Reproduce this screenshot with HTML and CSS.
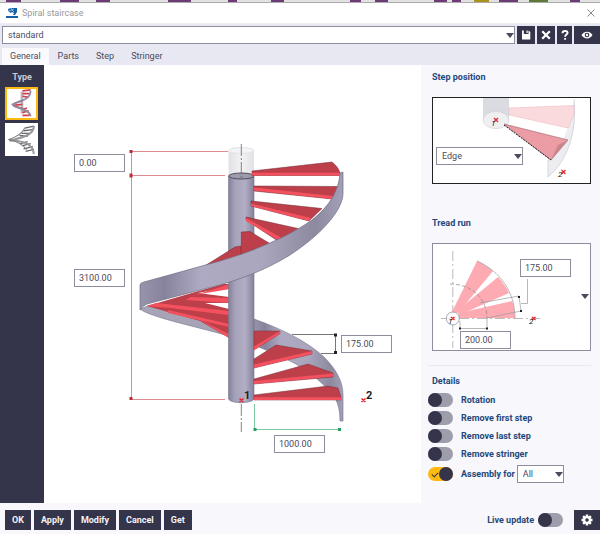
FILE: index.html
```html
<!DOCTYPE html>
<html lang="en">
<head>
    <meta charset="UTF-8">
    <meta name="viewport" content="width=device-width, initial-scale=1.0">
    <title>Spiral staircase</title>
    <link rel="stylesheet" href="styles.css">
</head>
<body>
    <svg class="strip" viewBox="0 0 600 2" preserveAspectRatio="none" aria-hidden="true">
        <path fill="#6d3b76" d="M6 0h15v2H6zM60 0h19v2H60zM96 0h14v2H96zM168 0h23v2h-23zM228 0h9v2h-9zM271 0h13v2h-13zM350 0h11v2h-11zM375 0h13v2h-13zM434 0h13v2h-13zM452 0h9v2h-9zM499 0h19v2h-19zM570 0h10v2h-10z"/>
        <path fill="#a8941c" d="M474 0h15v2h-15z"/>
        <path fill="#5d7a34" d="M529 0h19v2h-19z"/>
    </svg>
    <header class="titlebar">
        <svg class="logo" viewBox="0 0 12 10" aria-hidden="true">
            <path fill="#1362a8" d="M0 8h12v2H0zM2 1l3-1 6 0v4l-2 3H7l1-2-2-1-1 1-3-2z"/>
            <path stroke="#fff" stroke-width=".5" fill="none" d="M5 0l1 2 2-1M2 3l4-1 2 2"/>
        </svg>
        <h1>Spiral staircase</h1>
        <button class="close" aria-label="Close">
            <svg viewBox="0 0 8 8"><path d="M.5.5l7 7M7.5.5l-7 7" stroke="#888" fill="none"/></svg>
        </button>
    </header>

    <div class="toolbar">
        <span class="select preset">
            <select aria-label="Saved settings"><option>standard</option></select>
        </span>
        <button class="dark tool" aria-label="Save">
            <svg viewBox="0 0 10 10"><path fill="#fff" fill-rule="evenodd" d="M1 .5h1.800v3.500h4.700V.5l1.800 1.500v7.500H1zM5.500.5h1.200v2.500H5.500z"/></svg>
        </button>
        <button class="dark tool" aria-label="Delete">
            <svg viewBox="0 0 10 10"><path stroke="#fff" stroke-width="2.300" d="M1.200 1.200l7.600 7.600M8.800 1.200L1.200 8.800"/></svg>
        </button>
        <button class="dark tool help" aria-label="Help">
            <svg viewBox="0 0 10 10"><path fill="none" stroke="#fff" stroke-width="1.900" d="M2.500 3.200C2.500.300 7.600.300 7.600 2.800 7.600 4.500 5.100 4.600 5.100 6.700M5.100 7.900v1.900"/></svg>
        </button>
        <button class="dark tool view" aria-label="Preview">
            <svg viewBox="0 0 12 10"><path fill="#fff" d="M.5 5C3 .5 9 .5 11.500 5 9 9.500 3 9.500.5 5z"/><circle cx="6" cy="5" r="2.300" fill="#34344a"/><circle cx="6" cy="5" r="1.200" fill="#fff"/></svg>
        </button>
    </div>

    <nav class="tabs">
        <a class="active" href="#general">General</a>
        <a href="#parts">Parts</a>
        <a href="#step">Step</a>
        <a href="#stringer">Stringer</a>
    </nav>

    <main class="content">
        <aside class="types">
            <h2>Type</h2>
            <button class="type selected" aria-label="Stairs with center column">
                <svg viewBox="0 0 32 32">
                    <path fill="#b8b8c4" d="M15 3h3v24h-3z"/>
                    <path stroke="#d23f4c" stroke-width="1.900" d="M17 2l9-1M17 5h8M17 8l6 1M8 16l9-3M7 18l10-1M9 19l9 3M17 23l5-2M17 26l7-2M17 29h8"/>
                    <path fill="none" stroke="#8c8ca2" stroke-width="2" d="M26 2c0 8-7 10-13 12l-7 3c1 3 9 4 13 6 4 2 7 4 7 7"/>
                </svg>
            </button>
            <button class="type" aria-label="Stairs without column">
                <svg viewBox="0 0 32 32">
                    <path stroke="#68686d" stroke-width="1.300" d="M19 5l9-2M18 7.500l9-1M16 10l9 0M14 12l8 1M15 20l7-2M17 22l8-2M18 25l9-2M20 27.500l8-2"/>
                    <path fill="none" stroke="#97979c" stroke-width="2" d="M28 3c0 8-9 11-24 14 14 0 23 3 24 13"/>
                    <path fill="none" stroke="#77777c" d="M19 5c-2 5-7 8-15 11 8 2 14 5 17 10"/>
                </svg>
            </button>
        </aside>

        <section class="model" id="general">
            <div class="drawing">
                <svg viewBox="44 65 377 438" aria-hidden="true">
                    <defs>
                        <linearGradient id="column">
                            <stop offset="0" stop-color="#85819b"/>
                            <stop offset=".25" stop-color="#a5a1b9"/>
                            <stop offset=".65" stop-color="#b2aec5"/>
                            <stop offset="1" stop-color="#85819b"/>
                        </linearGradient>
                        <linearGradient id="band">
                            <stop offset="0" stop-color="#9894ad"/>
                            <stop offset=".12" stop-color="#87839c"/>
                            <stop offset=".3" stop-color="#aeaac3"/>
                            <stop offset=".6" stop-color="#aaa6be"/>
                            <stop offset=".86" stop-color="#8d899f"/>
                            <stop offset="1" stop-color="#a39fb8"/>
                        </linearGradient>
                        <linearGradient id="ghost">
                            <stop offset="0" stop-color="#d9d9df"/>
                            <stop offset=".5" stop-color="#f0f0f3"/>
                            <stop offset="1" stop-color="#dadae0"/>
                        </linearGradient>
                    </defs>

                    <!-- lower stringer, behind the column -->
                    <path fill="#a7a4b7" stroke="#777389" stroke-width=".6" d="M140 309C150 317 190 325 229 336V318L150 305z"/>
                    <path fill="url(#band)" stroke="#777389" stroke-width=".6" d="M254 319C282 329 306 341 323 356 336 369 343 381 343 395V421H340C340 407 337 399 329 390L315 377 296 364 278 355 254 345z"/>

                    <!-- treads on the left -->
                    <path fill="#bd3f4a" d="M147 306L223 284H229V338L200 321 168 312z"/>
                    <path fill="#fff" d="M198 293L229 287V297zM205 303H229V309z"/>
                    <path fill="#f4515f" d="M192 296L230 284V289L200 294zM190 297L229 298V303L186 300zM147 306L156 303 229 311V315L170 308zM168 310L229 324V327L168 313zM200 320L229 334V338z"/>

                    <path fill="url(#column)" stroke="#77738b" stroke-width=".6" d="M228.500 176V399C231 404 251 404 254 399V176z"/>
                    <path fill="url(#ghost)" opacity=".8" d="M228.500 176V150C231 146 251 146 254 150V176z"/>
                    <ellipse cx="241.300" cy="150.500" rx="12.600" ry="2.800" fill="#f4f4f7" stroke="#d8d8df" stroke-width=".5"/>
                    <ellipse cx="241.300" cy="176" rx="12.600" ry="3" fill="#9d9bab" stroke="#4f4c60"/>

                    <!-- upper treads -->
                    <g fill="#bd3f4a" stroke="#6f2832" stroke-width=".5">
                        <path d="M252 171L332 162C336 165 339 169 340 173V175.500H252z"/>
                        <path d="M254 186L338 186.500 332 199 254 191z"/>
                        <path d="M251 201L322 208.500 309 221 251 206z"/>
                        <path d="M246 217L298 228.500 278 241 246 220z"/>
                        <path d="M241.300 232L250 231.500 269 243 241.300 255z"/>
                        <path d="M203 267L235 247 241 246V256z"/>
                    </g>
                    <path fill="#f4515f" d="M252 172.800H340V175.500H252zM254 187.500L333 196 332 199 254 190.500zM251 203.500L311 218 309 221 251 206zM246 218L281 237.500 278 240 246 221z"/>

                    <!-- upper stringer -->
                    <path fill="url(#band)" stroke="#706c83" stroke-width=".7" d="M140 310V285Q140 283 144 282L220 261C261 249 292 234 312 220 331 205 339 189 340 173L343 172V193C343 210 322 234 290 255 267 269 244 278 223 284L147 304Q142 306 140 310z"/>

                    <!-- lower treads -->
                    <g fill="#bd3f4a" stroke="#7b303a" stroke-width=".5">
                        <path d="M254 331L280 331V333.500L254 350z"/>
                        <path d="M254 359L276 345 312 351V354L254 368z"/>
                        <path d="M254 379L308 364 333 373V377L254 384z"/>
                        <path d="M254 395L328 386 338 388 341 397V400H254z"/>
                    </g>
                    <path fill="#f4515f" d="M254 346.500L280 331V333.500L254 350zM254 364.500L312 351V354L254 368zM254 381L333 373.500V376.500L254 384zM254 397.200H341V400H254z"/>

                    <!-- dimension lines -->
                    <path fill="none" stroke="#df8b8f" d="M228 151.500H131.500V398M131 175.500H225M131 399.500H225"/>
                    <path fill="#b92f38" d="M129.500 150h3v3h-3zM129.500 173.500h3v4h-3zM129.500 397h3v3h-3z"/>
                    <path fill="none" stroke="#777" d="M292 334.500H335.500V353.500H321"/>
                    <path fill="#222" d="M334 333.500h3v3h-3zM334 351h3v3h-3z"/>
                    <path fill="none" stroke="#7fc6a2" d="M254.500 404V429.500H340"/>
                    <path fill="#21a35d" d="M253.500 428h3v3h-3zM338 428h3v3h-3z"/>
                    <path fill="none" stroke="#666" stroke-width=".8" stroke-dasharray="12 2 2 2" d="M241.300 144V179M241.300 404V432"/>
                    <path fill="none" stroke="#e8202a" stroke-width="1.500" d="M239.500 398.500l4 3.500M243.500 398.500l-4 3.500M361.500 398.500l4 3.500M365.500 398.500l-4 3.500"/>
                    <text class="point" x="244" y="399">1</text>
                    <text class="point" x="366" y="399">2</text>
                </svg>
                <input class="field top-offset" type="text" value="0.00" aria-label="Column extension">
                <input class="field height" type="text" value="3100.00" aria-label="Stair height">
                <input class="field rise" type="text" value="175.00" aria-label="Step rise">
                <input class="field radius" type="text" value="1000.00" aria-label="Step length">
            </div>
        </section>

        <aside class="options">
            <section class="group">
                <h2>Step position</h2>
                <div class="picture position">
                    <svg viewBox="433 98 157 85" aria-hidden="true">
                        <path fill="#ededf1" d="M574 99C578 130 568 160 548 177V160C562 147 570 130 574 99z"/>
                        <path fill="none" stroke="#c9c9d1" stroke-width=".7" d="M574 99C577 132 568 160 548 177V160"/>
                        <path fill="#dadae1" d="M483 98H509V119H483z"/>
                        <ellipse cx="496" cy="120" rx="13" ry="8.500" fill="#f0f0f3" stroke="#cfcfd8" stroke-width=".7"/>
                        <path fill="#fadadd" stroke="#edb5bb" stroke-width=".5" d="M509 108L574 105.500 574 114 568 128 509 115z"/>
                        <path fill="#eb9ca5" stroke="#a06068" stroke-width=".6" d="M504 124L568 140 551 160z"/>
                        <path fill="#c9868e" d="M568 140L558 145 551 160z"/>
                        <path fill="none" stroke="#222" stroke-dasharray="2 1" d="M504 125L551 160"/>
                        <path stroke="#e8202a" stroke-width="1.200" d="M494 118l4 4M498 118l-4 4M561.500 170l4 4M565.500 170l-4 4"/>
                        <text class="mark" x="491" y="126">1</text>
                        <text class="mark" x="558" y="177">2</text>
                    </svg>
                    <span class="select edge">
                        <select aria-label="Step position"><option>Edge</option></select>
                    </span>
                </div>
            </section>

            <section class="group">
                <h2>Tread run</h2>
                <div class="picture run">
                    <svg viewBox="433 244 157 106" aria-hidden="true">
                        <path fill="none" stroke="#aaa" stroke-width=".8" stroke-dasharray="10 3 2 3" d="M452.800 251V348M441 318.500H540"/>
                        <g fill="#feaab3">
                            <path d="M452 312L477 261C482 263 488 267 493 271L458 313z"/>
                            <path d="M457 311L498 277C503 282 506 287 509 293L459 315z"/>
                            <path d="M459 313L512 301C514 306 515 312 515 318H459z"/>
                        </g>
                        <path fill="none" stroke="#999" stroke-width=".7" d="M477 261C500 271 515 292 515 318M480 303L519 296 521 311 487 318M460 321V328.500H487V318M527.500 279V303.500H521"/>
                        <path fill="none" stroke="#888" stroke-width=".7" stroke-dasharray="4 2" d="M450 284C472 284 487 299 487 318"/>
                        <path fill="#222" d="M518 296h2v2h-2zM520 310h2v2h-2zM459 327.500h2v2h-2zM486 327.500h2v2h-2z"/>
                        <circle cx="452.800" cy="318.500" r="6.500" fill="#fff" fill-opacity=".8" stroke="#888" stroke-width=".7"/>
                        <path stroke="#e8202a" stroke-width="1.400" d="M451 317l3.500 3M454.500 317l-3.500 3M532 317l3.500 3M535.500 317l-3.500 3"/>
                        <text class="mark" x="448" y="324">1</text>
                        <text class="mark" x="529" y="324">2</text>
                    </svg>
                    <input class="field tread" type="text" value="175.00" aria-label="Tread run">
                    <input class="field inner" type="text" value="200.00" aria-label="Measuring distance">
                    <button class="arrow" aria-label="Choose tread run type"></button>
                </div>
            </section>

            <section class="group details">
                <h2>Details</h2>
                <label class="switch-row"><input class="switch" type="checkbox"> Rotation</label>
                <label class="switch-row"><input class="switch" type="checkbox"> Remove first step</label>
                <label class="switch-row"><input class="switch" type="checkbox"> Remove last step</label>
                <label class="switch-row"><input class="switch" type="checkbox"> Remove stringer</label>
                <div class="assembly">
                    <label class="switch-row"><input class="switch" type="checkbox" checked> Assembly for</label>
                    <span class="select all">
                        <select aria-label="Assembly for"><option>All</option></select>
                    </span>
                </div>
            </section>
        </aside>
    </main>

    <footer class="actions">
        <button class="dark">OK</button>
        <button class="dark">Apply</button>
        <button class="dark">Modify</button>
        <button class="dark">Cancel</button>
        <button class="dark">Get</button>
        <label class="live">Live update <input class="switch" type="checkbox"></label>
        <button class="dark settings" aria-label="Settings">
            <svg viewBox="0 0 12 12"><path stroke="#fff" stroke-width="2.400" d="M6 .5v11M.5 6h11M2.100 2.100l7.800 7.800M9.900 2.100L2.100 9.900"/><circle cx="6" cy="6" r="4" fill="#fff"/><circle cx="6" cy="6" r="1.800" fill="#34344a"/></svg>
        </button>
    </footer>
</body>
</html>
```
FILE: styles.css
```css
* {
    box-sizing: border-box;
}
body {
    margin: 0;
    min-height: 100vh;
    display: flex;
    flex-direction: column;
    background: #f7f7fc;
    color: #4b4b5c;
    font-family: Roboto, "Open Sans", sans-serif;
    font-size: 9px;
    line-height: 12px;
}
button, input, select {
    margin: 0;
    padding: 0;
    border: 0;
    border-radius: 0;
    font: inherit;
    color: inherit;
}
svg {
    display: block;
}
h1, h2 {
    margin: 0;
    font-size: 9px;
    line-height: 12px;
}

/* title bar */
.strip {
    width: 100%;
    height: 2px;
    background: #e2e2e2;
}
.titlebar {
    display: flex;
    align-items: center;
    gap: 4px;
    height: 22px;
    padding: 0 5px 0 6px;
    background: #fff;
    border-top: 1px solid #aaa;
    border-bottom: 1px solid #ececf2;
}
.titlebar h1 {
    flex: 1;
    color: #999;
    font-weight: 400;
}
.logo {
    width: 12px;
    height: 10px;
}
.close {
    background: none;
}
.close svg {
    width: 8px;
    height: 8px;
}

/* preset row */
.toolbar {
    display: flex;
    gap: 2px;
    padding: 2px 0 4px 2px;
    background: #e8e8f2;
}
.select {
    position: relative;
    display: block;
}
.select::after, .arrow::after {
    content: "";
    display: block;
    border: 4px solid transparent;
    border-top: 5px solid #4b4b5c;
    border-bottom: 0;
}
.select::after {
    position: absolute;
    right: 1px;
    top: 7px;
    pointer-events: none;
}
.select select {
    display: block;
    appearance: none;
    width: 100%;
    height: 18px;
    padding: 0 10px 0 5px;
    background: #fff;
    border: 1px solid #8d8d9e;
}
.preset {
    flex: 1;
}
.dark {
    display: flex;
    align-items: center;
    justify-content: center;
    background: #34344a;
    color: #f2f2f7;
    font-weight: 700;
}
.tool {
    width: 18px;
    height: 18px;
}
.tool svg {
    width: 10px;
    height: 10px;
}
.help {
    width: 15px;
}
.view {
    width: 26px;
}
.view svg {
    width: 12px;
}

/* tabs */
.tabs {
    display: flex;
    gap: 1px;
    padding-left: 2px;
    background: #e8e8f2;
}
.tabs a {
    padding: 2px 8px 3px;
    color: #4b4b5c;
    text-decoration: none;
}
.tabs .active {
    background: #fafafe;
}

/* content */
.content {
    flex: 1;
    display: flex;
}
.types {
    width: 44px;
    padding: 6px 5px;
    display: flex;
    flex-direction: column;
    gap: 3px;
    background: #34344a;
}
.types h2 {
    margin-bottom: 1px;
    color: #c9c9d4;
    text-align: center;
    font-weight: 700;
}
.type {
    width: 33px;
    height: 33px;
    background: #fff;
}
.type.selected {
    border: 2px solid #fdbb12;
}
.type svg {
    width: 100%;
}
.model {
    flex: 1;
    background: #fff;
}
.drawing {
    position: relative;
    width: 377px;
    margin: 0 auto;
}
.drawing svg {
    width: 377px;
}
.point {
    font-size: 11px;
    font-weight: 700;
    fill: #222;
}
.mark {
    font-size: 8px;
    font-style: italic;
    fill: #222;
}
.field {
    position: absolute;
    width: 51px;
    height: 18px;
    padding: 0 4px;
    background: #fff;
    border: 1px solid #8d8d9e;
}
.top-offset {
    left: 30px;
    top: 89px;
}
.height {
    left: 30px;
    top: 204px;
}
.rise {
    left: 297px;
    top: 270px;
}
.radius {
    left: 230px;
    top: 370px;
}

/* right panel */
.options {
    width: 179px;
    padding: 6px 9px 0 7px;
}
.group {
    padding: 0 0 14px 4px;
}
.group + .group {
    padding-top: 19px;
}
.group h2 {
    margin-bottom: 14px;
    color: #25487a;
    font-weight: 700;
}
.picture {
    position: relative;
    width: 159px;
    border: 1px solid #8d8d9e;
    background: #fff;
}
.position {
    border-color: #222;
}
.edge {
    position: absolute;
    left: 3px;
    top: 49px;
    width: 87px;
}
.tread {
    left: 87px;
    top: 15px;
}
.inner {
    left: 27px;
    top: 87px;
}
.arrow {
    position: absolute;
    right: 1px;
    top: 50px;
    background: none;
}
.group.details {
    display: flex;
    flex-direction: column;
    gap: 4px;
    padding-top: 9px;
    border-top: 1px solid #e9e9f0;
}
.details h2 {
    margin-bottom: 2px;
}
.switch-row {
    display: flex;
    align-items: center;
    gap: 8px;
    margin-left: -4px;
    color: #25487a;
    font-weight: 700;
}
.assembly {
    display: flex;
    align-items: center;
    gap: 2px;
}
.all {
    width: 47px;
}
.switch {
    appearance: none;
    position: relative;
    flex: none;
    width: 25px;
    height: 14px;
    border-radius: 7px;
    background: #9d9dac;
}
.switch::before {
    content: "";
    display: block;
    width: 14px;
    height: 14px;
    border-radius: 50%;
    background: #34344a;
}
.switch:checked {
    background: #fdbb12;
}
.switch:checked::before {
    margin-left: 11px;
}
.switch:checked::after {
    content: "";
    position: absolute;
    left: 4px;
    top: 5px;
    width: 5px;
    height: 3px;
    border: solid #34344a;
    border-width: 0 0 1px 1px;
    transform: rotate(-45deg);
}

/* footer */
.actions {
    display: flex;
    gap: 3px;
    padding: 7px 0 4px 5px;
}
.actions .dark {
    height: 20px;
    padding: 0 7px;
}
.live {
    display: flex;
    align-items: center;
    gap: 4px;
    margin-left: auto;
    margin-right: 8px;
    color: #25487a;
    font-weight: 700;
}
.actions .settings {
    width: 26px;
}
.settings svg {
    flex: none;
    width: 12px;
    height: 12px;
}
```
